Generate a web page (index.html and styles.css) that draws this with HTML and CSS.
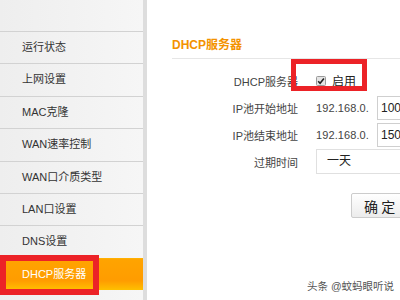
FILE: index.html
```html
<!DOCTYPE html>
<html lang="zh-CN">
<head>
<meta charset="UTF-8">
<meta name="viewport" content="width=device-width, initial-scale=1.0">
<title>DHCP服务器</title>
  <link rel="stylesheet" href="styles.css">
</head>
<body>
  <div class="page">
    <aside class="sidebar">
      <ul class="menu">
        <li class="menu-item">运行状态</li>
        <li class="menu-item">上网设置</li>
        <li class="menu-item">MAC克隆</li>
        <li class="menu-item">WAN速率控制</li>
        <li class="menu-item">WAN口介质类型</li>
        <li class="menu-item">LAN口设置</li>
        <li class="menu-item">DNS设置</li>
        <li class="menu-item active">DHCP服务器</li>
      </ul>
    </aside>

    <main class="content">
      <h2 class="title">DHCP服务器</h2>

      <div class="form">
        <div class="row">
          <label class="label">DHCP服务器</label>
          <div class="field">
            <span class="check">
              <svg width="10" height="10" viewBox="0 0 10 10">
                <rect x="0.5" y="0.5" width="9" height="9" rx="1" fill="#e4e4e4" stroke="#9a9a9a"/>
                <path d="M2.2 5.2 L4.1 7.2 L7.9 2.6" fill="none" stroke="#222" stroke-width="1.6"/>
              </svg>
            </span>
            <span class="check-text">启用</span>
          </div>
        </div>
        <div class="row">
          <label class="label">IP池开始地址</label>
          <div class="field">
            <span class="prefix">192.168.0.</span>
            <span class="input">100</span>
          </div>
        </div>
        <div class="row">
          <label class="label">IP池结束地址</label>
          <div class="field">
            <span class="prefix">192.168.0.</span>
            <span class="input">150</span>
          </div>
        </div>
        <div class="row">
          <label class="label">过期时间</label>
          <div class="field">
            <span class="select">一天</span>
          </div>
        </div>
      </div>

      <div class="actions">
        <button class="btn">确 定</button>
      </div>
    </main>

    <!-- red highlight boxes drawn over the screenshot -->
    <div class="mark mark-menu"></div>
    <div class="mark mark-check"></div>

    <div class="watermark">头条 @蚊蚂眼听说</div>
  </div>
</body>
</html>
```

FILE: styles.css
```css
html, body {
  margin: 0;
  padding: 0;
  overflow: hidden;
  background: #fff;
}

body {
  font-family: 'Liberation Sans', 'Noto Sans CJK SC', sans-serif;
  font-size: 11px;
  color: #333;
}

.page {
  display: flex;
  width: 400px;
  height: 300px;
  position: relative;
  overflow: hidden;
}

/* left menu */
.sidebar {
  width: 143px;
  flex: none;
  padding-top: 31px;
  background: linear-gradient(to right, #eeeeee, #f6f6f6);
  border-right: 4px solid #dddddd;
}

.menu {
  list-style: none;
  margin: 0;
  padding: 0;
}

.menu-item {
  box-sizing: border-box;
  height: 32.4px;
  line-height: 31px;
  padding-left: 22px;
  border-top: 1px solid #d2d2d2;
  white-space: nowrap;
}

.menu-item.active {
  color: #fff;
  border-top-color: #ffb000;
  background: linear-gradient(to bottom, #ffa400 0%, #ff9c00 70%, #ffc000 100%);
}

/* right panel */
.content {
  flex: 1;
  min-width: 0;
  padding-left: 25px;
}

.title {
  margin: 0;
  padding-top: 37px;
  padding-bottom: 5px;
  line-height: 16px;
  font-size: 12px;
  font-weight: bold;
  color: #f39200;
  border-bottom: 1px solid #e6e6e6;
}

.form {
  margin-top: 8px;
}

.row {
  display: grid;
  grid-template-columns: 126px 1fr;
  column-gap: 18px;
  align-items: center;
  height: 27px;
}

.label {
  text-align: right;
  color: #444;
  white-space: nowrap;
}

.field {
  display: flex;
  align-items: center;
  gap: 8px;
}

.check {
  display: flex;
}

.check svg {
  display: block;
}

.check-text {
  font-size: 12px;
  margin-left: -2px;
  color: #222;
}

.prefix {
  font-size: 11px;
  letter-spacing: 0.1px;
  color: #444;
  white-space: nowrap;
}

.input {
  box-sizing: border-box;
  flex: none;
  width: 70px;
  height: 24px;
  line-height: 22px;
  padding-left: 3px;
  border: 1px solid #cfcfcf;
  font-size: 12px;
  color: #222;
}

.select {
  box-sizing: border-box;
  flex: none;
  width: 130px;
  height: 25px;
  line-height: 23px;
  padding-left: 10px;
  border: 1px solid #e0e0e0;
  font-size: 12px;
  color: #222;
}

.actions {
  padding-left: 179px;
  margin-top: 18px;
}

.btn {
  width: 66px;
  height: 25px;
  padding: 0 0 0 12px;
  text-align: left;
  font-family: 'Noto Sans CJK SC', sans-serif;
  font-size: 14px;
  color: #222;
  border: 1px solid #cccccc;
  border-radius: 2px;
  background: linear-gradient(to bottom, #ffffff, #ececec);
}

/* annotation boxes */
.mark {
  position: absolute;
  box-sizing: border-box;
  border: 6px solid #ec2227;
}

.mark-menu {
  left: 0;
  top: 255px;
  width: 99px;
  height: 40px;
}

.mark-check {
  left: 291px;
  top: 59px;
  width: 76px;
  height: 32px;
  border-width: 5px;
}

.watermark {
  position: absolute;
  left: 307px;
  top: 278px;
  font-size: 10.5px;
  color: #555;
  text-shadow: 0 0 2px #fff;
  white-space: nowrap;
}
```
